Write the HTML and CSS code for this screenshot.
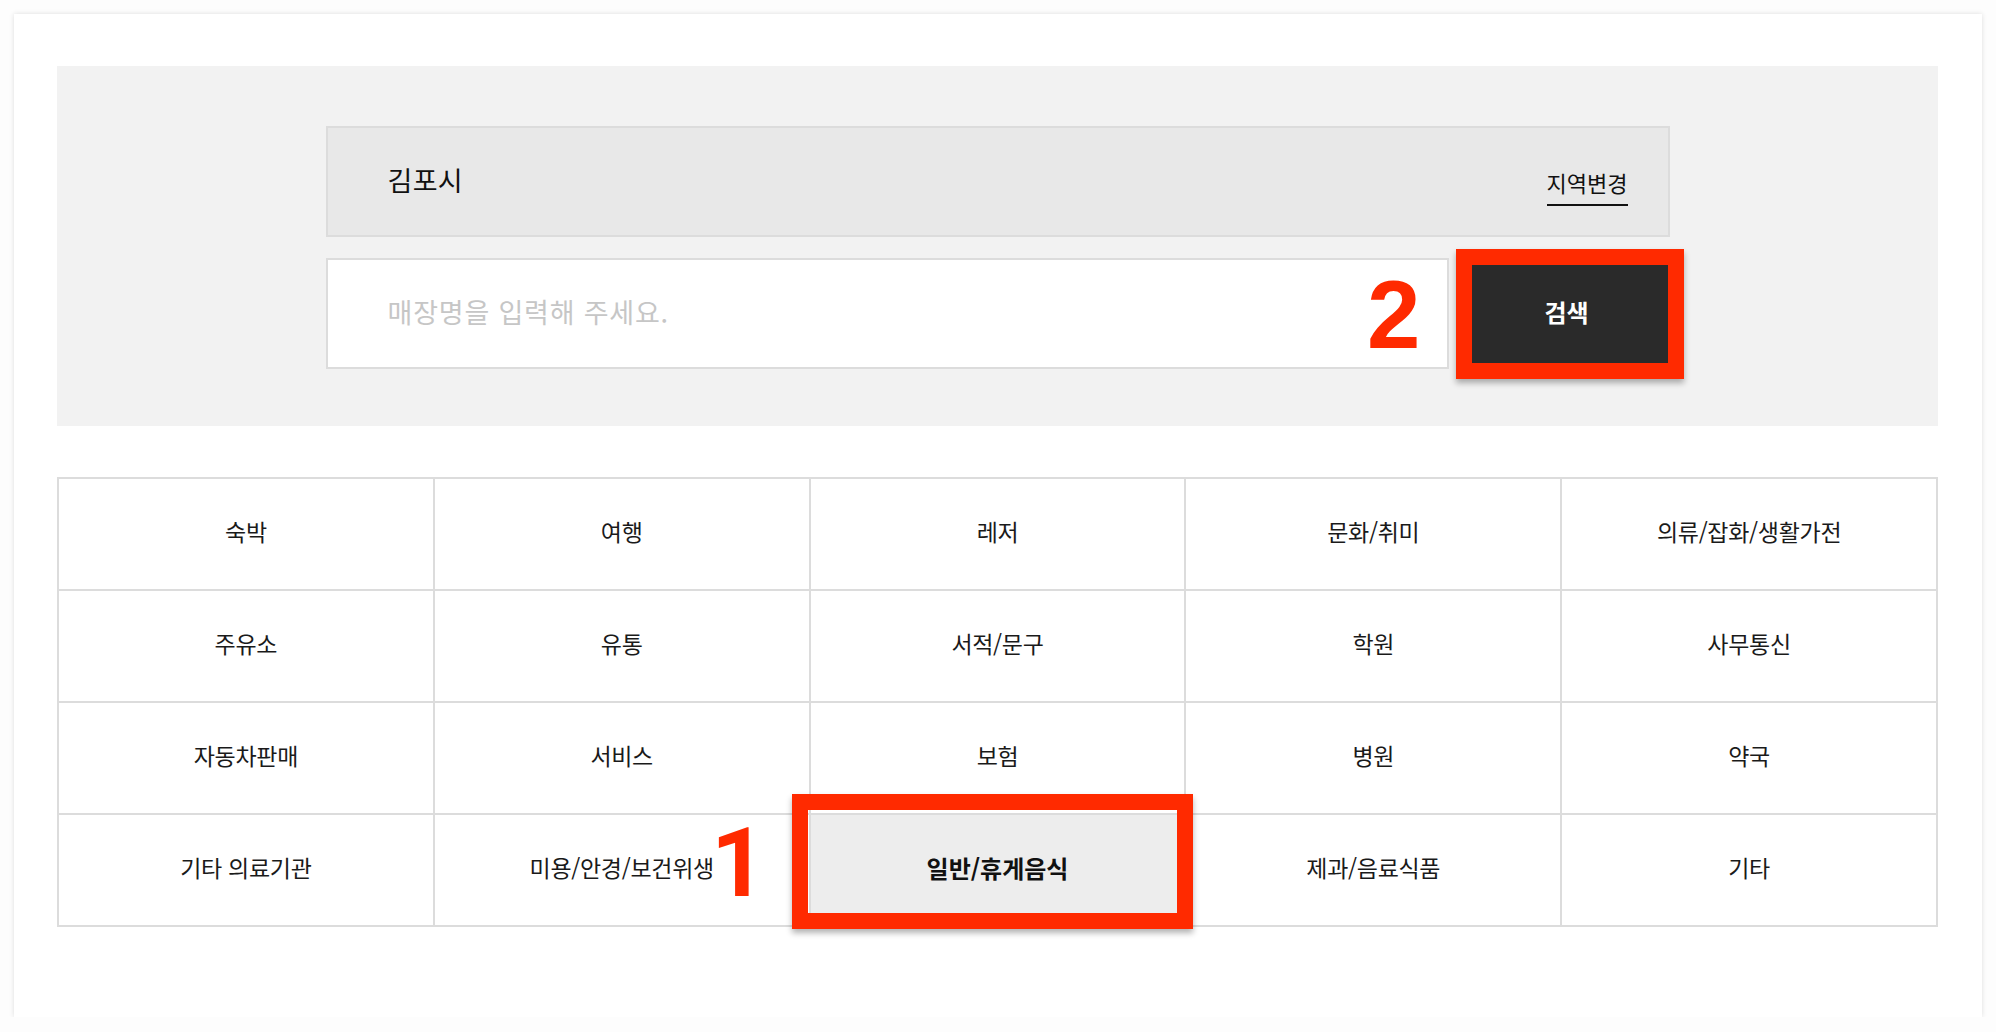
FILE: index.html
```html
<!DOCTYPE html>
<html lang="ko">
<head>
<meta charset="utf-8">
<title>매장 찾기</title>
<link rel="stylesheet" href="styles.css">
</head>
<body>
<div class="card">
  <section class="search-panel">
    <div class="search-inner">
      <div class="region-box">
        <span class="region-name">김포시</span>
        <a class="region-change" href="#">지역변경</a>
      </div>
      <div class="search-row">
        <div class="search-input">매장명을 입력해 주세요.</div>
        <button class="search-btn" type="button">검색</button>
      </div>
    </div>
  </section>

  <div class="category-grid">
    <div class="cat">숙박</div>
    <div class="cat">여행</div>
    <div class="cat">레저</div>
    <div class="cat">문화/취미</div>
    <div class="cat">의류/잡화/생활가전</div>
    <div class="cat">주유소</div>
    <div class="cat">유통</div>
    <div class="cat">서적/문구</div>
    <div class="cat">학원</div>
    <div class="cat">사무통신</div>
    <div class="cat">자동차판매</div>
    <div class="cat">서비스</div>
    <div class="cat">보험</div>
    <div class="cat">병원</div>
    <div class="cat">약국</div>
    <div class="cat">기타 의료기관</div>
    <div class="cat">미용/안경/보건위생</div>
    <div class="cat active">일반/휴게음식</div>
    <div class="cat">제과/음료식품</div>
    <div class="cat">기타</div>
  </div>

  <div class="mark mark-search"></div>
  <div class="mark mark-cat"></div>
  <span class="step step-two">2</span>
  <span class="step step-one">1</span>
</div>
</body>
</html>
```

FILE: styles.css
```css
* { box-sizing: border-box; }

html, body {
  margin: 0;
  padding: 0;
  background: #fdfdfd;
}

body {
  padding: 14px 0 0 14px;
  font-family: "Noto Sans CJK KR", "Noto Sans", sans-serif;
  color: #1a1a1a;
}

.card {
  position: relative;
  width: 1968px;
  height: 1003px;
  background: #ffffff;
  box-shadow: 0 0 5px rgba(0, 0, 0, 0.13);
  padding: 52px 44px 0 43px;
}

.search-panel {
  background: #f2f2f2;
  height: 360px;
  padding-top: 60px;
}

.search-inner {
  width: 1344px;
  margin: 0 auto;
}

.region-box {
  height: 111px;
  background: #e8e8e8;
  border: 2px solid #dcdcdc;
  display: flex;
  align-items: center;
  justify-content: space-between;
  padding: 0 40px 4px 60px;
}

.region-name {
  font-size: 27px;
  color: #111;
  letter-spacing: 0.3px;
}

.region-change {
  font-size: 22px;
  color: #111;
  text-decoration: none;
  border-bottom: 2px solid #111;
  padding-bottom: 6px;
  margin-top: 12px;
  letter-spacing: 0;
}

.search-row {
  display: flex;
  gap: 15px;
  margin-top: 21px;
}

.search-input {
  flex: 0 0 1123px;
  height: 111px;
  background: #fff;
  border: 2px solid #dcdcdc;
  display: flex;
  align-items: center;
  padding: 0 0 4px 60px;
  font-size: 27px;
  color: #c6c6c6;
  letter-spacing: 0.8px;
}

.search-btn {
  flex: 1;
  height: 111px;
  border: 0;
  background: #2a2a2a;
  color: #fff;
  font-family: inherit;
  font-size: 24px;
  font-weight: 700;
  letter-spacing: 0;
  padding: 0 0 5px 0;
}

.category-grid {
  margin-top: 51px;
  display: grid;
  grid-template-columns: repeat(5, 1fr);
  grid-auto-rows: 112px;
  border-top: 2px solid #dcdcdc;
  border-left: 2px solid #dcdcdc;
}

.cat {
  display: flex;
  align-items: center;
  justify-content: center;
  border-right: 2px solid #dcdcdc;
  border-bottom: 2px solid #dcdcdc;
  padding-bottom: 6px;
  font-size: 23px;
  color: #1a1a1a;
  letter-spacing: -0.3px;
}

.cat.active {
  background: #ededed;
  font-weight: 700;
  font-size: 24px;
  letter-spacing: 0;
  color: #111;
}

.mark {
  position: absolute;
  border: 16px solid #ff2a00;
  box-shadow: 0 4px 6px rgba(0, 0, 0, 0.3);
}

.mark-search {
  left: 1442px;
  top: 235px;
  width: 228px;
  height: 130px;
}

.mark-cat {
  left: 778px;
  top: 780px;
  width: 401px;
  height: 135px;
}

.step {
  position: absolute;
  font-family: "Liberation Sans", Arial, sans-serif;
  font-weight: 700;
  font-size: 96px;
  line-height: 1;
  color: #ff2a00;
}

.step-two {
  left: 1353px;
  top: 253px;
}

.step-one {
  font-family: Roboto, "Liberation Sans", sans-serif;
  left: 697px;
  top: 801px;
}
```
